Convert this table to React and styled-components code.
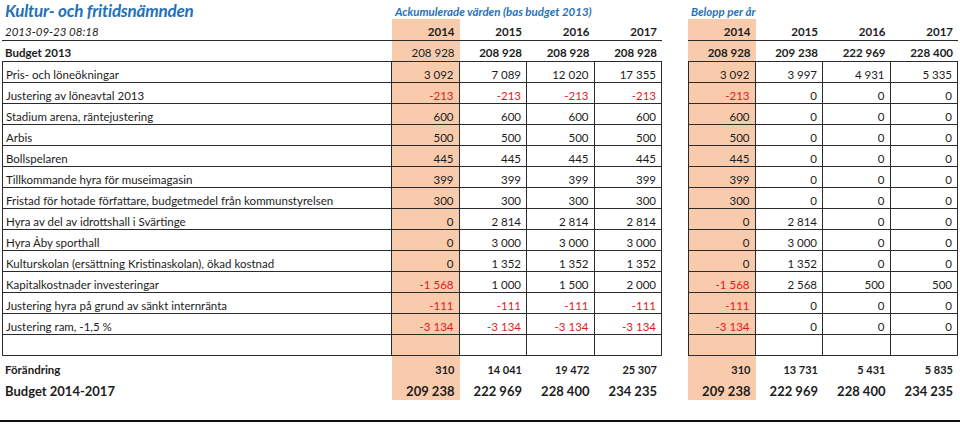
import styled, { createGlobalStyle } from 'styled-components';

const COLS = '390px repeat(4, 67.5px) 26px repeat(4, 67.5px)';
const LINE = '#2b2b2b';
const PEACH = '#f8cbad';
const BLUE = '#1f72b8';

const rows = [
  ['Pris- och löneökningar', ['3 092', '7 089', '12 020', '17 355'], ['3 092', '3 997', '4 931', '5 335']],
  ['Justering av löneavtal 2013', ['-213', '-213', '-213', '-213'], ['-213', '0', '0', '0']],
  ['Stadium arena, räntejustering', ['600', '600', '600', '600'], ['600', '0', '0', '0']],
  ['Arbis', ['500', '500', '500', '500'], ['500', '0', '0', '0']],
  ['Bollspelaren', ['445', '445', '445', '445'], ['445', '0', '0', '0']],
  ['Tillkommande hyra för museimagasin', ['399', '399', '399', '399'], ['399', '0', '0', '0']],
  ['Fristad för hotade författare, budgetmedel från kommunstyrelsen', ['300', '300', '300', '300'], ['300', '0', '0', '0']],
  ['Hyra av del av idrottshall i Svärtinge', ['0', '2 814', '2 814', '2 814'], ['0', '2 814', '0', '0']],
  ['Hyra Åby sporthall', ['0', '3 000', '3 000', '3 000'], ['0', '3 000', '0', '0']],
  ['Kulturskolan (ersättning Kristinaskolan), ökad kostnad', ['0', '1 352', '1 352', '1 352'], ['0', '1 352', '0', '0']],
  ['Kapitalkostnader investeringar', ['-1 568', '1 000', '1 500', '2 000'], ['-1 568', '2 568', '500', '500']],
  ['Justering hyra på grund av sänkt internränta', ['-111', '-111', '-111', '-111'], ['-111', '0', '0', '0']],
  ['Justering ram, -1,5 %', ['-3 134', '-3 134', '-3 134', '-3 134'], ['-3 134', '0', '0', '0']],
  ['', ['', '', '', ''], ['', '', '', '']],
];

const years = ['2014', '2015', '2016', '2017'];

const GlobalStyle = createGlobalStyle`
  body {
    margin: 0;
    background: #ffffff;
    font-family: Lato, "Liberation Sans", sans-serif;
    color: #1c1c1c;
  }
`;

const Sheet = styled.div`
  width: 960px;
  height: 424px;
  padding-left: 2px;
  box-sizing: border-box;
`;

const Row = styled.div`
  display: grid;
  grid-template-columns: ${COLS};
  height: ${(p) => p.$h}px;
`;

const Cell = styled.div`
  display: flex;
  align-items: flex-end;
  justify-content: ${(p) => (p.$left ? 'flex-start' : 'flex-end')};
  box-sizing: border-box;
  padding: 0 5px ${(p) => p.$pb ?? 1}px ${(p) => (p.$left ? 3 : 5)}px;
  background: ${(p) => (p.$hl ? PEACH : 'transparent')};
  color: ${(p) => (p.$neg ? '#e3191d' : '#1c1c1c')};
  font-size: ${(p) => p.$size || 11.5}px;
  font-weight: ${(p) => (p.$bold ? 700 : 400)};
  font-style: ${(p) => (p.$italic ? 'italic' : 'normal')};
  white-space: nowrap;
`;

const HeadRow = styled(Row)`
  & > div:not(:nth-child(6)) {
    border-bottom: 1px solid ${LINE};
  }
`;

const Title = styled.div`
  grid-column: 1 / 2;
  font-size: 17px;
  font-weight: 700;
  font-style: italic;
  color: ${BLUE};
  padding: 0 0 0 3px;
  letter-spacing: -0.2px;
  white-space: nowrap;
`;

const GroupLabel = styled.div`
  grid-column: ${(p) => p.$col};
  align-self: end;
  font-size: 11.5px;
  font-weight: 700;
  font-style: italic;
  color: ${BLUE};
  padding: 0 0 3px 3px;
  white-space: nowrap;
`;

const Table = styled.div`
  display: flex;
  flex-direction: column;
`;

const TableRow = styled(Row)`
  & > div:not(:nth-child(6)) {
    border-right: 1px solid ${LINE};
    border-bottom: 1px solid ${LINE};
  }
  & > div:nth-child(1),
  & > div:nth-child(7) {
    border-left: 1px solid ${LINE};
  }
  &:first-child {
    height: ${(p) => p.$h + 1}px;
  }
  &:first-child > div:not(:nth-child(6)) {
    border-top: 1px solid ${LINE};
  }
`;

const Footer = styled.div`
  height: 20px;
  margin-left: -2px;
  border-bottom: 2px solid #111;
`;

const isNeg = (v) => v.startsWith('-');

function Group({ values, bold, size, pb, hlBold }) {
  return values.map((v, i) => (
    <Cell
      key={i}
      $hl={i === 0}
      $neg={isNeg(v)}
      $bold={bold && (i > 0 || hlBold)}
      $size={size}
      $pb={pb}
    >
      {v}
    </Cell>
  ));
}

export default function App() {
  return (
    <Sheet>
      <GlobalStyle />
      <Row $h={19}>
        <Title>Kultur- och fritidsnämnden</Title>
        <GroupLabel $col="2 / 6">Ackumulerade värden (bas budget 2013)</GroupLabel>
        <GroupLabel $col="7 / 11">Belopp per år</GroupLabel>
      </Row>
      <HeadRow $h={22}>
        <Cell $left $italic $pb={2}>2013-09-23 08:18</Cell>
        <Group values={years} bold hlBold pb={2} />
        <div />
        <Group values={years} bold hlBold pb={2} />
      </HeadRow>
      <Row $h={20}>
        <Cell $left $bold $pb={2}>Budget 2013</Cell>
        <Group values={['208 928', '208 928', '208 928', '208 928']} bold pb={2} />
        <div />
        <Group values={['208 928', '209 238', '222 969', '228 400']} bold hlBold pb={2} />
      </Row>
      <Table>
        {rows.map(([label, acc, yearly], i) => (
          <TableRow key={i} $h={21}>
            <Cell $left>{label}</Cell>
            <Group values={acc} />
            <div />
            <Group values={yearly} />
          </TableRow>
        ))}
      </Table>
      <Row $h={23}>
        <Cell $left $bold $pb={3}>Förändring</Cell>
        <Group values={['310', '14 041', '19 472', '25 307']} bold hlBold size={11} pb={3} />
        <div />
        <Group values={['310', '13 731', '5 431', '5 835']} bold hlBold size={11} pb={3} />
      </Row>
      <Row $h={21}>
        <Cell $left $bold $size={13} $pb={1}>Budget 2014-2017</Cell>
        <Group values={['209 238', '222 969', '228 400', '234 235']} bold hlBold size={13} pb={1} />
        <div />
        <Group values={['209 238', '222 969', '228 400', '234 235']} bold hlBold size={13} pb={1} />
      </Row>
      <Footer />
    </Sheet>
  );
}
